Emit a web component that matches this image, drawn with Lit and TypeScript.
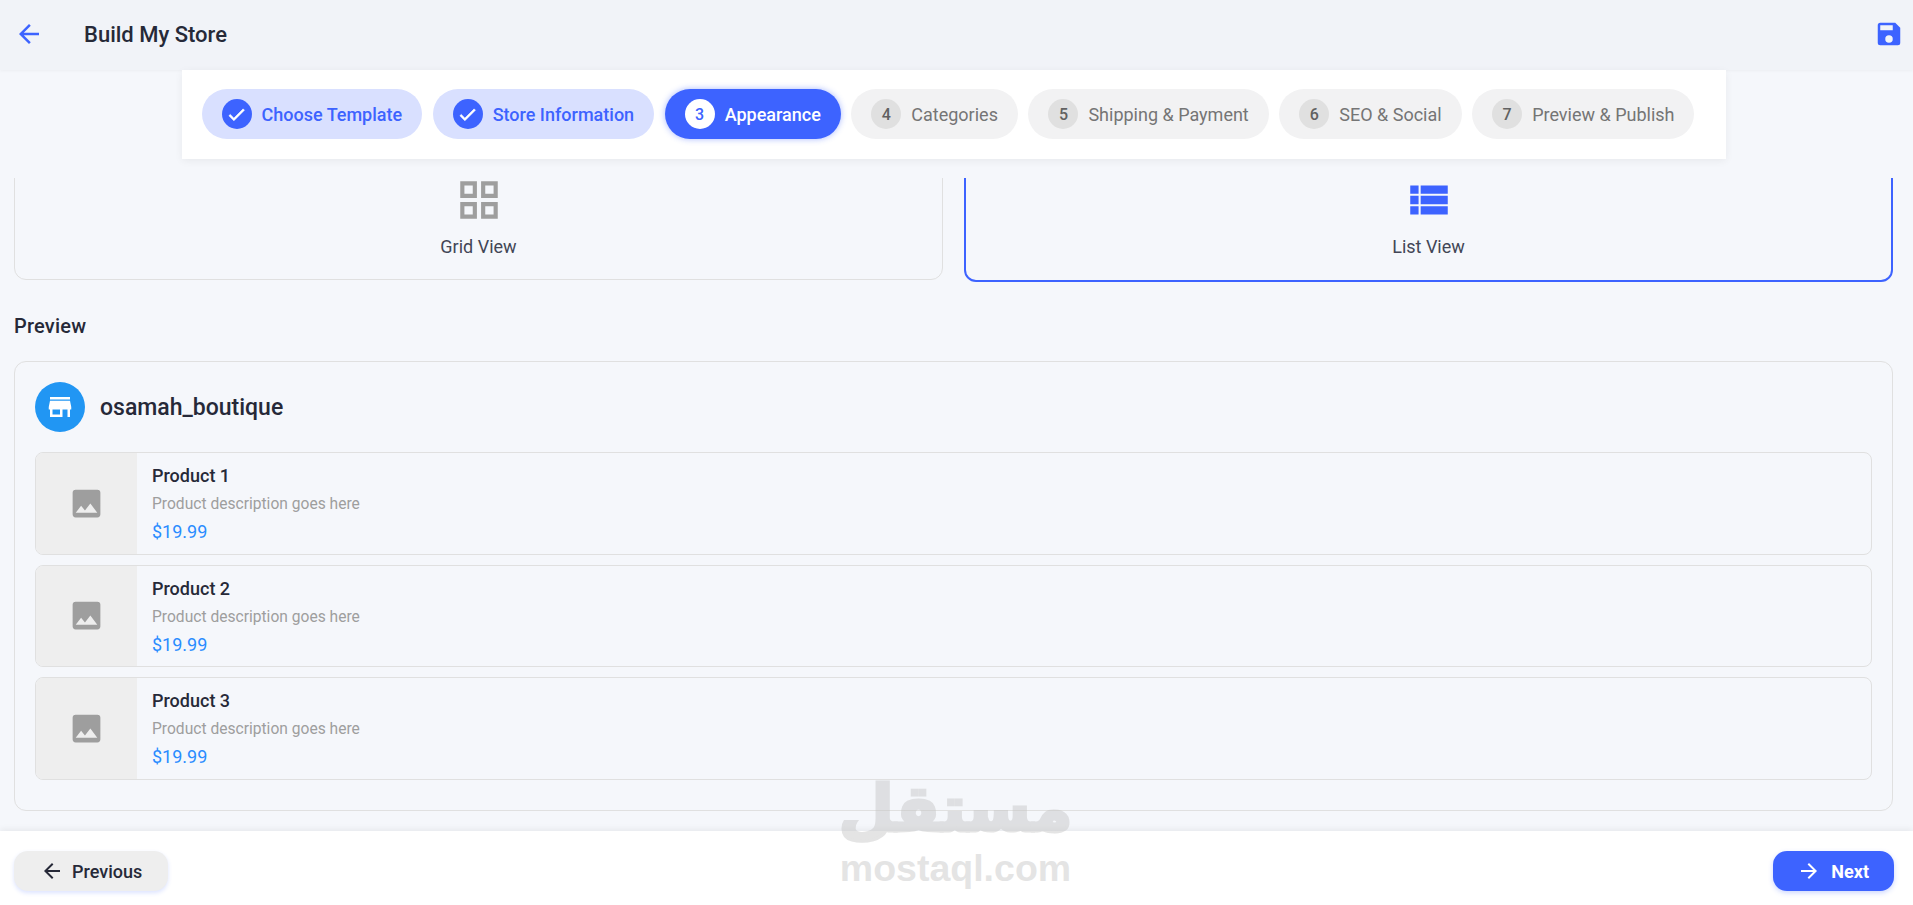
import { LitElement, html, css, svg } from "lit";
import { customElement } from "lit/decorators.js";

const icon = (d: unknown, size: number) => html`
  <svg class="icon" width=${size} height=${size} viewBox="0 0 24 24" fill="currentColor">${d}</svg>
`;

const arrowBack = svg`<path d="M20 11H7.83l5.59-5.59L12 4l-8 8 8 8 1.41-1.41L7.83 13H20v-2z" />`;
const arrowForward = svg`<path d="M12 4l-1.41 1.41L16.17 11H4v2h12.17l-5.58 5.59L12 20l8-8z" />`;
const save = svg`<path d="M17 3H5a2 2 0 0 0-2 2v14a2 2 0 0 0 2 2h14a2 2 0 0 0 2-2V7l-4-4zm-5 16a3 3 0 1 1 0-6 3 3 0 0 1 0 6zm3-10H5V5h10v4z" />`;
const check = svg`<path d="M9 16.17 4.83 12l-1.42 1.41L9 19 21 7l-1.41-1.41z" />`;
const gridView = svg`<path d="M3 3v8h8V3H3zm6 6H5V5h4v4zm-6 4v8h8v-8H3zm6 6H5v-4h4v4zm4-16v8h8V3h-8zm6 6h-4V5h4v4zm-6 4v8h8v-8h-8zm6 6h-4v-4h4v4z" />`;
const viewList = svg`<path d="M3 14h4v-4H3v4zm0 5h4v-4H3v4zM3 9h4V5H3v4zm5 5h13v-4H8v4zm0 5h13v-4H8v4zM8 5v4h13V5H8z" />`;
const store = svg`<path d="M20 4H4v2h16V4zm1 10v-2l-1-5H4l-1 5v2h1v6h10v-6h4v6h2v-6h1zm-9 4H6v-4h6v4z" />`;
const image = svg`<path d="M21 19V5a2 2 0 0 0-2-2H5a2 2 0 0 0-2 2v14a2 2 0 0 0 2 2h14a2 2 0 0 0 2-2zM8.5 13.5l2.5 3.01L14.5 12l4.5 6H5l3.5-4.5z" />`;

const steps = [
  { label: "Choose Template", state: "done" },
  { label: "Store Information", state: "done" },
  { label: "Appearance", state: "active" },
  { label: "Categories", state: "todo" },
  { label: "Shipping & Payment", state: "todo" },
  { label: "SEO & Social", state: "todo" },
  { label: "Preview & Publish", state: "todo" },
];

const products = ["Product 1", "Product 2", "Product 3"];

@customElement("app-root")
export class AppRoot extends LitElement {
  static styles = css`
    :host {
      display: flex;
      flex-direction: column;
      position: relative;
      height: 905px;
      overflow: hidden;
      background: #f5f7fb;
      color: #262938;
      font-family: Roboto, sans-serif;
    }

    .icon {
      display: block;
      flex: none;
    }

    .app-bar {
      display: flex;
      align-items: center;
      flex: none;
      height: 70px;
      padding: 0 9px 2px 14px;
      box-sizing: border-box;
      background: #f1f3f8;
      box-shadow: 0 1px 3px rgba(0, 0, 0, 0.04);
    }

    .back {
      color: #3d63ff;
      margin-right: 40px;
    }

    .app-title {
      flex: 1;
      font-size: 22px;
      font-weight: 500;
    }

    .save {
      color: #3d63ff;
    }

    .stepper {
      display: flex;
      gap: 10.5px;
      flex: none;
      align-self: center;
      position: relative;
      z-index: 1;
      margin-left: -5px;
      padding: 19px 32px 20px 20px;
      background: #fff;
      box-shadow: 0 2px 8px rgba(0, 0, 0, 0.06);
    }

    .step {
      display: flex;
      align-items: center;
      gap: 10px;
      height: 50px;
      padding: 0 20px;
      border-radius: 25px;
      box-sizing: border-box;
      font-size: 18px;
      white-space: nowrap;
    }

    .step-dot {
      display: flex;
      align-items: center;
      justify-content: center;
      width: 30px;
      height: 30px;
      border-radius: 50%;
      font-size: 16px;
      font-weight: 500;
    }

    .step-dot .icon {
      stroke: currentColor;
      stroke-width: 0.8;
    }

    .step.done {
      background: #d9e0ff;
      color: #3d63ff;
      font-weight: 500;
    }

    .step.done .step-dot {
      background: #3d63ff;
      color: #fff;
    }

    .step.active {
      background: #3d63ff;
      color: #fff;
      font-weight: 500;
      box-shadow: 0 0 6px rgba(61, 99, 255, 0.45);
    }

    .step.active .step-dot {
      background: #fff;
      color: #3d63ff;
    }

    .step.todo {
      background: #f2f2f3;
      color: #757575;
    }

    .step.todo .step-dot {
      background: #e0e0e0;
      color: #616161;
    }

    .content {
      display: flex;
      flex-direction: column;
      justify-content: flex-end;
      flex: 1;
      min-height: 0;
      overflow: hidden;
      margin-top: 19px;
      padding: 0 20px 20.5px 14px;
    }

    .layouts {
      display: grid;
      grid-template-columns: 929px 929px;
      justify-content: space-between;
      flex: none;
    }

    .layout {
      display: flex;
      flex-direction: column;
      align-items: center;
      gap: 11px;
      height: 140px;
      box-sizing: border-box;
      padding-top: 34px;
      border: 1px solid #e0e0e0;
      border-radius: 12px;
      color: #9e9e9e;
    }

    .layout span {
      color: #424656;
      font-size: 18px;
      line-height: 21px;
    }

    .layout.selected {
      border: 2px solid #3d63ff;
      color: #3d63ff;
      height: 142px;
      padding-top: 33px;
    }

    .section-title {
      flex: none;
      margin: 32px 0 23px;
      font-size: 20px;
      font-weight: 500;
      line-height: 24px;
      letter-spacing: 0.2px;
    }

    .preview {
      flex: none;
      padding: 20px;
      border: 1px solid #e0e0e0;
      border-radius: 12px;
    }

    .brand {
      display: flex;
      align-items: center;
      gap: 15px;
      margin-bottom: 20px;
    }

    .avatar {
      display: flex;
      align-items: center;
      justify-content: center;
      width: 50px;
      height: 50px;
      border-radius: 50%;
      background: #2196f3;
      color: #fff;
    }

    .brand-name {
      font-size: 23px;
      font-weight: 500;
    }

    .product {
      display: flex;
      height: 102.5px;
      box-sizing: border-box;
      margin-bottom: 10px;
      border: 1px solid #e0e0e0;
      border-radius: 8px;
      overflow: hidden;
    }

    .thumb {
      display: flex;
      align-items: center;
      justify-content: center;
      width: 101px;
      background: #eeeeee;
      color: #9e9e9e;
    }

    .product-info {
      display: flex;
      flex-direction: column;
      justify-content: center;
      padding: 2px 0 0 15px;
    }

    .product-name {
      font-size: 18px;
      font-weight: 500;
      line-height: 24px;
    }

    .product-desc {
      margin: 6px 0;
      color: #9e9e9e;
      font-size: 15.6px;
      line-height: 20px;
    }

    .product-price {
      color: #2a8cff;
      font-size: 18px;
      line-height: 24px;
    }

    .footer {
      display: flex;
      align-items: center;
      justify-content: space-between;
      flex: none;
      height: 74px;
      box-sizing: border-box;
      padding: 6px 19px 0 14px;
      background: #fff;
      box-shadow: 0 -2px 6px rgba(0, 0, 0, 0.06);
    }

    .btn {
      display: flex;
      align-items: center;
      height: 40px;
      box-sizing: border-box;
      border-radius: 14px;
      font-size: 18px;
      font-weight: 500;
    }

    .btn.prev {
      gap: 8px;
      padding: 0 26px;
      background: #eeeeee;
      box-shadow: 0 2px 4px rgba(61, 99, 255, 0.18);
    }

    .btn.next {
      gap: 10px;
      padding: 0 25px 0 24px;
      background: #3d63ff;
      color: #fff;
      font-weight: 700;
      box-shadow: 0 2px 5px rgba(61, 99, 255, 0.25);
    }

    /* watermark sits on top of everything, that's why it is absolute */
    .watermark {
      display: flex;
      flex-direction: column;
      align-items: center;
      position: absolute;
      left: 841px;
      top: 770px;
      width: 229px;
      color: #c4c4c4;
      opacity: 0.45;
      font-weight: 700;
      pointer-events: none;
    }

    .watermark-ar {
      font-family: "DejaVu Sans", sans-serif;
      font-size: 64px;
      line-height: 78px;
      -webkit-text-stroke: 3px #c4c4c4;
    }

    .watermark-en {
      font-family: "Liberation Sans", sans-serif;
      font-size: 37.5px;
      line-height: 40px;
    }
  `;

  render() {
    return html`
      <header class="app-bar">
        <div class="back">${icon(arrowBack, 30)}</div>
        <div class="app-title">Build My Store</div>
        <div class="save">${icon(save, 30)}</div>
      </header>

      <nav class="stepper">
        ${steps.map(
          (step, index) => html`
            <div class="step ${step.state}">
              <div class="step-dot">
                ${step.state === "done" ? icon(check, 21) : index + 1}
              </div>
              ${step.label}
            </div>
          `,
        )}
      </nav>

      <main class="content">
        <div class="layouts">
          <div class="layout">${icon(gridView, 50)}<span>Grid View</span></div>
          <div class="layout selected">
            ${icon(viewList, 50)}<span>List View</span>
          </div>
        </div>

        <div class="section-title">Preview</div>

        <section class="preview">
          <div class="brand">
            <div class="avatar">${icon(store, 30)}</div>
            <div class="brand-name">osamah_boutique</div>
          </div>
          ${products.map(
            (name) => html`
              <div class="product">
                <div class="thumb">${icon(image, 37)}</div>
                <div class="product-info">
                  <div class="product-name">${name}</div>
                  <div class="product-desc">Product description goes here</div>
                  <div class="product-price">$19.99</div>
                </div>
              </div>
            `,
          )}
        </section>
      </main>

      <footer class="footer">
        <div class="btn prev">${icon(arrowBack, 24)}Previous</div>
        <div class="btn next">${icon(arrowForward, 24)}Next</div>
      </footer>

      <div class="watermark">
        <div class="watermark-ar" lang="ar" dir="rtl">مستقل</div>
        <div class="watermark-en">mostaql.com</div>
      </div>
    `;
  }
}
